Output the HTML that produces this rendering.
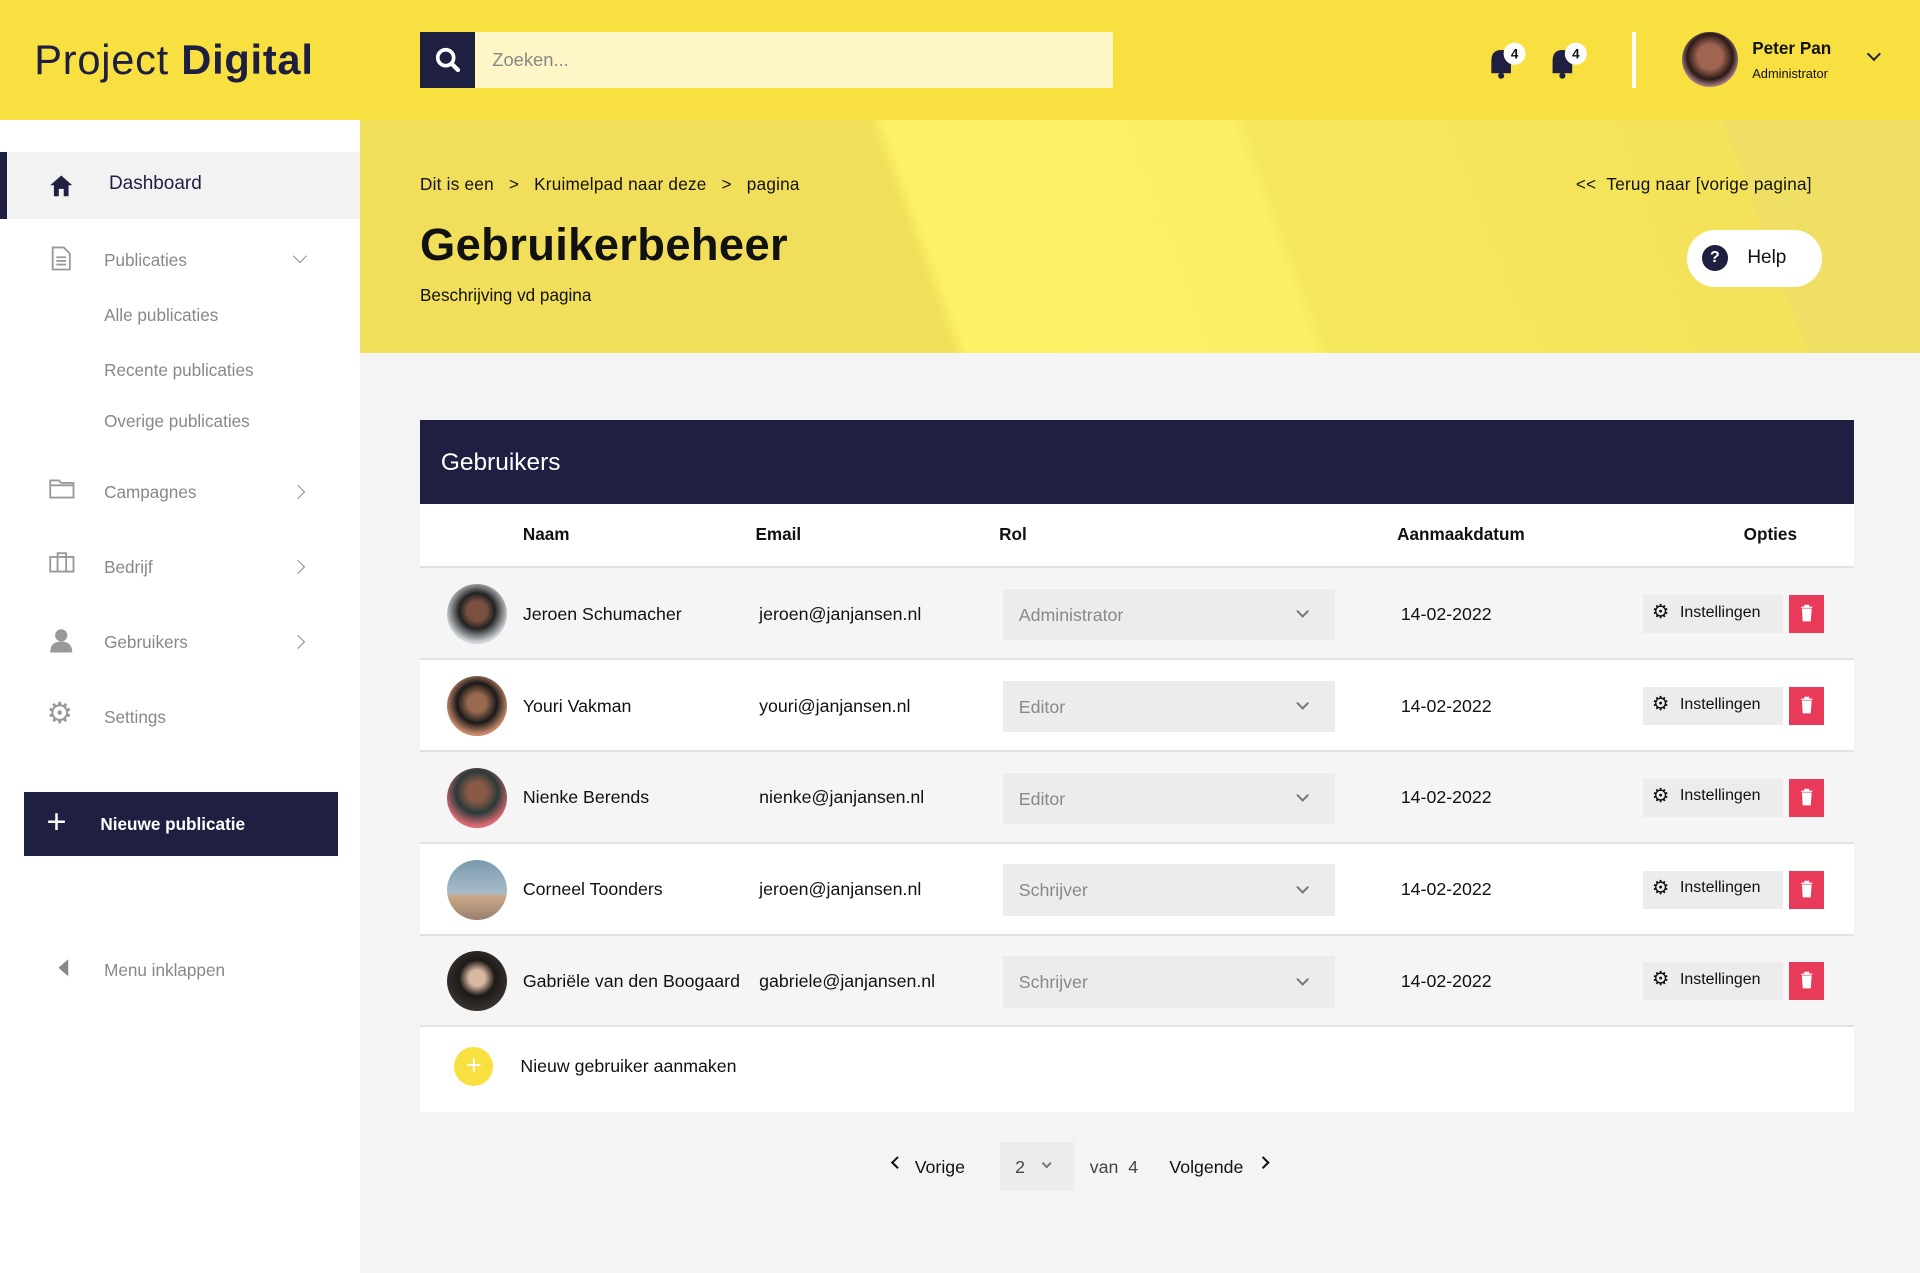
<!DOCTYPE html>
<html><head><meta charset="utf-8"><style>
html{zoom:1.22449}
*{box-sizing:border-box;margin:0;padding:0}
body{width:1568px;height:1040px;overflow:hidden;font-family:"Liberation Sans",sans-serif;background:#f4f4f4;color:#111;position:relative}
.abs{position:absolute}
.top{left:0;top:0;width:1568px;height:98px;background:#f8e040}
.logo{left:28px;top:29px;font-size:34px;color:#1e1e40;letter-spacing:0.6px}
.logo b{font-weight:900}
.search{left:343px;top:26px;width:566px;height:46px;background:#fef6c6}
.sbtn{left:343px;top:26px;width:45px;height:46px;background:#1f1f42}
.side{left:0;top:98px;width:294px;height:942px;background:#fff}
.hero{left:294px;top:98px;width:1274px;height:190px;background:linear-gradient(70deg,#f1de5a 0%,#f1de5a 36%,#fbf266 37%,#faf066 58%,#f6e85c 59%,#f3e25a 88%,#efe065 88%)}
.nav{font-size:14px;color:#888}
.card{left:343px;top:343px;width:1171px;height:565px;background:#fff}
.chead{left:343px;top:343px;width:1171px;height:69px;background:#1f1f42;color:#fff;font-size:20px;padding:24px 17px}
.th{top:428px;font-size:14px;font-weight:bold}
.row{left:343px;width:1171px;height:75px;border-bottom:2px solid #e2e2e2}
.av{width:49px;height:49px;border-radius:50%;left:22px;top:13px}
.row span{position:absolute;top:29px;font-size:14.5px}
.sel{position:absolute;left:476px;top:17px;width:271px;height:42px;background:#ececec;color:#888;font-size:14.5px;padding:13px 13px}
.sel:after{content:"";position:absolute;right:22px;top:15px;width:6px;height:6px;border-right:2px solid #777;border-bottom:2px solid #777;transform:rotate(45deg)}
.ins{position:absolute;left:999px;top:22px;width:114px;height:31px;background:#ececec;font-size:13px;padding:7px 0 0 30px}
.ins:before{content:"⚙";position:absolute;left:7px;top:4px;font-size:16px}
.del{position:absolute;left:1118px;top:22px;width:29px;height:31px;background:#e83b5a}
</style></head><body>
<div class="abs top"></div>
<div class="abs logo">Project <b>Digital</b></div>
<div class="abs search"></div>
<div class="abs sbtn"><svg width="45" height="46"><circle cx="21" cy="21" r="6.5" fill="none" stroke="#fff" stroke-width="3"/><line x1="26" y1="26" x2="31" y2="31" stroke="#fff" stroke-width="3.5" stroke-linecap="round"/></svg></div>
<div class="abs" style="left:402px;top:40px;font-size:15px;color:#888">Zoeken...</div>
<svg class="abs" style="left:1212px;top:32px" width="90" height="36"><g fill="#1f1f42"><path d="M6 28 L6 18 Q6 9 14 9 Q22 9 22 18 L22 28 Z"/><circle cx="14" cy="30" r="2.5"/><path d="M56 28 L56 18 Q56 9 64 9 Q72 9 72 18 L72 28 Z"/><circle cx="64" cy="30" r="2.5"/></g><circle cx="25" cy="12" r="9" fill="#fff"/><circle cx="75" cy="12" r="9" fill="#fff"/><text x="25" y="16" font-size="11" font-weight="bold" text-anchor="middle" fill="#111" font-family="Liberation Sans">4</text><text x="75" y="16" font-size="11" font-weight="bold" text-anchor="middle" fill="#111" font-family="Liberation Sans">4</text></svg>
<div class="abs" style="left:1333px;top:26px;width:3px;height:46px;background:#fff"></div>
<div class="abs" style="left:1374px;top:26px;width:45px;height:45px;border-radius:50%;background:radial-gradient(circle at 50% 45%,#a06450 30%,#2a1a18 55%,#e8b0b8 80%)"></div>
<div class="abs" style="left:1431px;top:31px;font-size:14px;font-weight:bold">Peter Pan</div>
<div class="abs" style="left:1431px;top:54px;font-size:10.5px">Administrator</div>
<div class="abs" style="left:1526px;top:40px;width:8px;height:8px;border-right:2px solid #1f1f42;border-bottom:2px solid #1f1f42;transform:rotate(45deg)"></div>

<div class="abs side"></div>
<div class="abs" style="left:0;top:124px;width:294px;height:55px;background:#f2f2f2;border-left:6px solid #1f1f42"></div>
<svg class="abs" style="left:40px;top:141px" width="20" height="20"><path d="M10 2 L19 10 L16 10 L16 19 L12 19 L12 13 L8 13 L8 19 L4 19 L4 10 L1 10 Z" fill="#1f1f42"/></svg>
<div class="abs" style="left:89px;top:141px;font-size:15.5px;color:#1f1f42">Dashboard</div>
<svg class="abs" style="left:40px;top:200px" width="20" height="22"><path d="M3 2 H12 L17 7 V20 H3 Z M6 10 H14 M6 13 H14 M6 16 H14" fill="none" stroke="#999" stroke-width="1.5"/></svg>
<div class="abs nav" style="left:85px;top:204px">Publicaties</div>
<div class="abs" style="left:241px;top:205px;width:8px;height:8px;border-right:1.5px solid #888;border-bottom:1.5px solid #888;transform:rotate(45deg)"></div>
<div class="abs nav" style="left:85px;top:249px">Alle publicaties</div>
<div class="abs nav" style="left:85px;top:294px">Recente publicaties</div>
<div class="abs nav" style="left:85px;top:336px">Overige publicaties</div>
<svg class="abs" style="left:40px;top:390px" width="22" height="18"><path d="M1 2 H8 L10 4 H20 V16 H1 Z M1 6 H20" fill="none" stroke="#999" stroke-width="1.5"/></svg>
<div class="abs nav" style="left:85px;top:394px">Campagnes</div>
<div class="abs" style="left:239px;top:398px;width:8px;height:8px;border-right:1.5px solid #888;border-bottom:1.5px solid #888;transform:rotate(-45deg)"></div>
<svg class="abs" style="left:40px;top:451px" width="22" height="18"><path d="M1 4 H20 V16 H1 Z M7 4 V1 H14 V4 M7 4 V16 M14 4 V16" fill="none" stroke="#999" stroke-width="1.5"/></svg>
<div class="abs nav" style="left:85px;top:455px">Bedrijf</div>
<div class="abs" style="left:239px;top:459px;width:8px;height:8px;border-right:1.5px solid #888;border-bottom:1.5px solid #888;transform:rotate(-45deg)"></div>
<svg class="abs" style="left:40px;top:513px" width="20" height="20"><circle cx="10" cy="6" r="5" fill="#999"/><path d="M1 20 Q1 11 10 11 Q19 11 19 20 Z" fill="#999"/></svg>
<div class="abs nav" style="left:85px;top:516px">Gebruikers</div>
<div class="abs" style="left:239px;top:520px;width:8px;height:8px;border-right:1.5px solid #888;border-bottom:1.5px solid #888;transform:rotate(-45deg)"></div>
<div class="abs" style="left:38px;top:568px;font-size:24px;color:#999">⚙</div>
<div class="abs nav" style="left:85px;top:577px">Settings</div>
<div class="abs" style="left:20px;top:647px;width:256px;height:52px;background:#1f1f42"></div>
<div class="abs" style="left:38px;top:656px;font-size:28px;color:#fff;font-weight:300">+</div>
<div class="abs" style="left:82px;top:665px;font-size:14px;font-weight:bold;color:#fff">Nieuwe publicatie</div>
<svg class="abs" style="left:46px;top:782px" width="12" height="16"><path d="M10 1 L2 8 L10 15 Z" fill="#888"/></svg>
<div class="abs nav" style="left:85px;top:784px">Menu inklappen</div>

<div class="abs hero"></div>
<div class="abs" style="left:343px;top:142px;font-size:14px;letter-spacing:0.2px">Dit is een &nbsp;&nbsp;&gt;&nbsp;&nbsp; Kruimelpad naar deze &nbsp;&nbsp;&gt;&nbsp;&nbsp; pagina</div>
<div class="abs" style="left:1287px;top:142px;font-size:14px;letter-spacing:0.2px">&lt;&lt; &nbsp;Terug naar [vorige pagina]</div>
<div class="abs" style="left:343px;top:179px;font-size:37px;font-weight:900;letter-spacing:0.3px">Gebruikerbeheer</div>
<div class="abs" style="left:343px;top:233px;font-size:14px">Beschrijving vd pagina</div>
<div class="abs" style="left:1378px;top:188px;width:110px;height:46px;background:#fff;border-radius:23px"></div>
<div class="abs" style="left:1390px;top:200px;width:21px;height:21px;border-radius:50%;background:#1f1f42;color:#fff;font-size:13px;font-weight:bold;text-align:center;line-height:21px">?</div>
<div class="abs" style="left:1427px;top:202px;font-size:15.5px">Help</div>

<div class="abs card"></div>
<div class="abs chead">Gebruikers</div>
<div class="abs th" style="left:427px">Naam</div>
<div class="abs th" style="left:617px">Email</div>
<div class="abs th" style="left:816px">Rol</div>
<div class="abs th" style="left:1141px">Aanmaakdatum</div>
<div class="abs th" style="left:1424px">Opties</div>
<div class="abs" style="left:343px;top:462px;width:1171px;height:2px;background:#e2e2e2"></div>

<svg width="0" height="0" style="position:absolute"><defs><symbol id="tr" viewBox="0 0 29 31"><path d="M10 10 H19 M13 10 V8.5 H16 V10 M11 11.5 H18 L17.3 21 H11.7 Z" fill="#fff" stroke="#fff" stroke-width="1"/></symbol></defs></svg>
<div class="abs row" style="top:464px;background:#f5f5f5"><div class="abs av" style="background:radial-gradient(circle at 50% 45%,#7a5040 22%,#222 40%,#cfd4d8 70%)"></div><span style="left:84px">Jeroen Schumacher</span><span style="left:277px">jeroen@janjansen.nl</span><div class="sel">Administrator</div><span style="left:801px">14-02-2022</span><div class="ins">Instellingen</div><div class="del"><svg width="29" height="31"><use href="#tr"/></svg></div></div>
<div class="abs row" style="top:539px;background:#fff"><div class="abs av" style="background:radial-gradient(circle at 50% 45%,#9a6a50 20%,#1a1a1a 45%,#c98a6a 70%)"></div><span style="left:84px">Youri Vakman</span><span style="left:277px">youri@janjansen.nl</span><div class="sel">Editor</div><span style="left:801px">14-02-2022</span><div class="ins">Instellingen</div><div class="del"><svg width="29" height="31"><use href="#tr"/></svg></div></div>
<div class="abs row" style="top:614px;background:#f5f5f5"><div class="abs av" style="background:radial-gradient(circle at 50% 40%,#8a5a45 20%,#2a3a3a 45%,#d86a70 72%)"></div><span style="left:84px">Nienke Berends</span><span style="left:277px">nienke@janjansen.nl</span><div class="sel">Editor</div><span style="left:801px">14-02-2022</span><div class="ins">Instellingen</div><div class="del"><svg width="29" height="31"><use href="#tr"/></svg></div></div>
<div class="abs row" style="top:689px;background:#fff"><div class="abs av" style="background:linear-gradient(#7a9ab0,#a8bcc8 55%,#c8a888 60%,#9a8070)"></div><span style="left:84px">Corneel Toonders</span><span style="left:277px">jeroen@janjansen.nl</span><div class="sel">Schrijver</div><span style="left:801px">14-02-2022</span><div class="ins">Instellingen</div><div class="del"><svg width="29" height="31"><use href="#tr"/></svg></div></div>
<div class="abs row" style="top:764px;background:#f5f5f5"><div class="abs av" style="background:radial-gradient(circle at 50% 45%,#d8b8a0 18%,#1e1a18 40%,#3a3430 75%)"></div><span style="left:84px">Gabriële van den Boogaard</span><span style="left:277px">gabriele@janjansen.nl</span><div class="sel">Schrijver</div><span style="left:801px">14-02-2022</span><div class="ins">Instellingen</div><div class="del"><svg width="29" height="31"><use href="#tr"/></svg></div></div>
<div class="abs" style="left:371px;top:855px;width:32px;height:32px;border-radius:50%;background:#f8e040;color:#fff;text-align:center;font-size:22px;line-height:31px">+</div>
<div class="abs" style="left:425px;top:862px;font-size:14.5px">Nieuw gebruiker aanmaken</div>

<div class="abs" style="left:729px;top:946px;width:7px;height:7px;border-left:2px solid #111;border-bottom:2px solid #111;transform:rotate(45deg)"></div>
<div class="abs" style="left:747px;top:945px;font-size:14.5px">Vorige</div>
<div class="abs" style="left:817px;top:933px;width:60px;height:40px;background:#ececec"></div>
<div class="abs" style="left:829px;top:945px;font-size:14.5px;color:#444">2</div>
<div class="abs" style="left:852px;top:947px;width:6px;height:6px;border-right:2px solid #777;border-bottom:2px solid #777;transform:rotate(45deg)"></div>
<div class="abs" style="left:890px;top:945px;font-size:14.5px;color:#444">van &nbsp;4</div>
<div class="abs" style="left:955px;top:945px;font-size:14.5px">Volgende</div>
<div class="abs" style="left:1028px;top:946px;width:7px;height:7px;border-right:2px solid #111;border-top:2px solid #111;transform:rotate(45deg)"></div>
</body></html>
